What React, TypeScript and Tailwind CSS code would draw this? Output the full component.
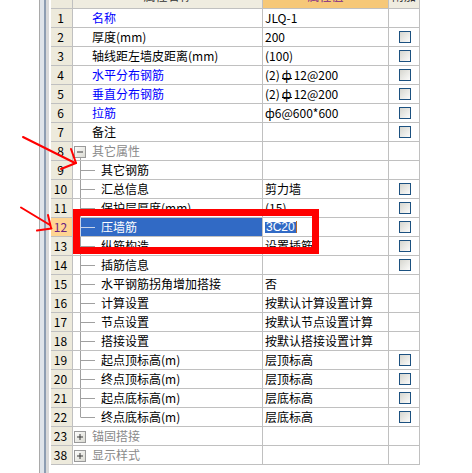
import React from 'react'

type Row = {
  n: string
  name: string
  kind: 'top' | 'group' | 'child'
  blue?: boolean
  value?: React.ReactNode
  check?: boolean
  open?: boolean
  last?: boolean
  selected?: boolean
}

const Grade3 = () => (
  <span className="relative mx-[2px] inline-block">
    ф
    <span className="absolute bottom-[2px] left-0 right-0 h-px bg-black" />
  </span>
)

const rows: Row[] = [
  { n: '1', name: '名称', kind: 'top', blue: true, value: 'JLQ-1' },
  { n: '2', name: '厚度(mm)', kind: 'top', value: '200', check: true },
  { n: '3', name: '轴线距左墙皮距离(mm)', kind: 'top', value: '(100)', check: true },
  {
    n: '4',
    name: '水平分布钢筋',
    kind: 'top',
    blue: true,
    value: (
      <>
        (2)
        <Grade3 />
        12@200
      </>
    ),
    check: true,
  },
  {
    n: '5',
    name: '垂直分布钢筋',
    kind: 'top',
    blue: true,
    value: (
      <>
        (2)
        <Grade3 />
        12@200
      </>
    ),
    check: true,
  },
  { n: '6', name: '拉筋', kind: 'top', blue: true, value: 'ф6@600*600', check: true },
  { n: '7', name: '备注', kind: 'top', check: true },
  { n: '8', name: '其它属性', kind: 'group', open: true },
  { n: '9', name: '其它钢筋', kind: 'child' },
  { n: '10', name: '汇总信息', kind: 'child', value: '剪力墙', check: true },
  { n: '11', name: '保护层厚度(mm)', kind: 'child', value: '(15)', check: true },
  { n: '12', name: '压墙筋', kind: 'child', check: true, selected: true },
  { n: '13', name: '纵筋构造', kind: 'child', value: '设置插筋', check: true },
  { n: '14', name: '插筋信息', kind: 'child', check: true },
  { n: '15', name: '水平钢筋拐角增加搭接', kind: 'child', value: '否' },
  { n: '16', name: '计算设置', kind: 'child', value: '按默认计算设置计算' },
  { n: '17', name: '节点设置', kind: 'child', value: '按默认节点设置计算' },
  { n: '18', name: '搭接设置', kind: 'child', value: '按默认搭接设置计算' },
  { n: '19', name: '起点顶标高(m)', kind: 'child', value: '层顶标高', check: true },
  { n: '20', name: '终点顶标高(m)', kind: 'child', value: '层顶标高', check: true },
  { n: '21', name: '起点底标高(m)', kind: 'child', value: '层底标高', check: true },
  { n: '22', name: '终点底标高(m)', kind: 'child', value: '层底标高', check: true, last: true },
  { n: '23', name: '锚固搭接', kind: 'group' },
  { n: '38', name: '显示样式', kind: 'group' },
]

const TreeBox = ({ open }: { open?: boolean }) => (
  <svg width="13" height="18" viewBox="0 0 13 18" className="shrink-0">
    <defs>
      <linearGradient id={open ? 'bx-o' : 'bx-c'} x1="0" y1="0" x2="1" y2="1">
        <stop offset="0" stopColor="#ffffff" />
        <stop offset="1" stopColor="#d8d8d0" />
      </linearGradient>
    </defs>
    <rect x="0.5" y="4.5" width="11" height="11" fill={`url(#${open ? 'bx-o' : 'bx-c'})`} stroke="#9a9a9a" />
    <line x1="3" y1="10" x2="9" y2="10" stroke="#3a3a3a" />
    {!open && <line x1="6" y1="7" x2="6" y2="13" stroke="#3a3a3a" />}
    {open && <line x1="6.5" y1="16" x2="6.5" y2="18" stroke="#a0a0a0" />}
  </svg>
)

const Connector = ({ last, light }: { last?: boolean; light?: boolean }) => (
  <svg width="28" height="18" viewBox="0 0 28 18" className="shrink-0">
    <line x1="7.5" y1="0" x2="7.5" y2={last ? 9.5 : 18} stroke={light ? '#c8d4ea' : '#a0a0a0'} />
    <line x1="8" y1="9.5" x2="22" y2="9.5" stroke={light ? '#c8d4ea' : '#a0a0a0'} />
  </svg>
)

const CheckBox = () => (
  <div className="h-3 w-3 border border-[#1c5180] bg-linear-to-br from-[#d6d6cf] to-[#fbfbfa]" />
)

const NameCell = ({ row }: { row: Row }) => {
  const color = row.selected
    ? 'text-white bg-[#316ac5]'
    : row.kind === 'group'
      ? 'text-[#8a8a8a]'
      : row.blue
        ? 'text-[#0000ff]'
        : 'text-black'
  return (
    <div className={`flex w-[190px] shrink-0 items-center border-r border-[#c0c0c0] ${color}`}>
      {row.kind === 'top' && <span className="pl-[19px] whitespace-nowrap">{row.name}</span>}
      {row.kind === 'group' && (
        <div className="flex items-center gap-[5px] pl-px">
          <TreeBox open={row.open} />
          <span className="whitespace-nowrap">{row.name}</span>
        </div>
      )}
      {row.kind === 'child' && (
        <>
          <Connector last={row.last} light={row.selected} />
          <span className="whitespace-nowrap">{row.name}</span>
        </>
      )}
    </div>
  )
}

export default function App() {
  return (
    <div className="relative h-[473px] w-[472px] overflow-hidden bg-white font-['Noto_Sans_CJK_SC',sans-serif] text-[12px] leading-none">
      <div className="flex h-full">
        <div className="flex h-full shrink-0">
          <div className="w-[39px]" />
          <div className="w-px bg-[#a9a9a9]" />
          <div className="w-[4px] bg-[#dfe4ea]" />
          <div className="w-[2px] bg-[#8d9db2]" />
          <div className="w-[3px] bg-[#d9d9d9]" />
          <div className="w-[2px] bg-white" />
        </div>

        <div className="flex flex-col">
          {/* header row, scrolled so only the bottom of the captions shows */}
          <div className="flex h-[9px] overflow-hidden border-b border-[#c0c0c0]">
            <div className="w-[22px] shrink-0 border-r border-[#c0c0c0] bg-[#edeadc]" />
            <div className="flex w-[190px] shrink-0 justify-center border-r border-[#c0c0c0] bg-[#efece0] text-[#333]">
              <span className="-mt-[10px] leading-[12px]">属性名称</span>
            </div>
            <div className="flex w-[126px] shrink-0 justify-center border-r border-[#c0c0c0] bg-[#f6c878] text-[#7a1f86]">
              <span className="-mt-[10px] leading-[12px]">属性值</span>
            </div>
            <div className="flex w-[31px] shrink-0 justify-center border-r border-[#c0c0c0] bg-[#efece0] text-[#333]">
              <span className="-mt-[10px] leading-[12px]">附加</span>
            </div>
          </div>

          {rows.map((row) => (
            <div key={row.n} className="flex h-[19px] border-b border-[#c0c0c0]">
              <div
                className={`flex w-[22px] shrink-0 items-center justify-center border-r border-[#c0c0c0] pr-[2px] ${
                  row.selected ? 'bg-[#ffd592] text-[#6b2380]' : 'bg-[#edeadc] text-black'
                }`}
              >
                {row.n}
              </div>
              <NameCell row={row} />
              <div className="flex w-[126px] shrink-0 items-center border-r border-[#c0c0c0] pl-[2px] whitespace-nowrap text-black">
                {row.selected ? (
                  <div className="flex items-center">
                    <span className="bg-[#316ac5] px-px font-['Liberation_Sans',sans-serif] text-[12px] leading-[11px] text-white">
                      3C20
                    </span>
                    <span className="h-[12px] w-px bg-[#b86a2a]" />
                  </div>
                ) : (
                  row.value
                )}
              </div>
              <div className="flex w-[31px] shrink-0 items-center justify-center border-r border-[#c0c0c0] pl-px">
                {row.check && <CheckBox />}
              </div>
            </div>
          ))}
        </div>
      </div>

      <div className="pointer-events-none absolute left-[73px] top-[209px] h-[45px] w-[246px] border-[7px] border-[#ff0000]" />

      <svg
        className="pointer-events-none absolute inset-0"
        width="472"
        height="473"
        viewBox="0 0 472 473"
        fill="none"
        stroke="#ff0000"
        strokeWidth="2"
        strokeLinecap="round"
      >
        <path d="M23 137 L75 163" />
        <path d="M71 149 L76 163" />
        <path d="M61 169 L76 163" />
        <path d="M21 207.5 L50 225" />
        <path d="M48 215 L51 228" />
        <path d="M37 230.5 L51.5 228.5" />
      </svg>
    </div>
  )
}
